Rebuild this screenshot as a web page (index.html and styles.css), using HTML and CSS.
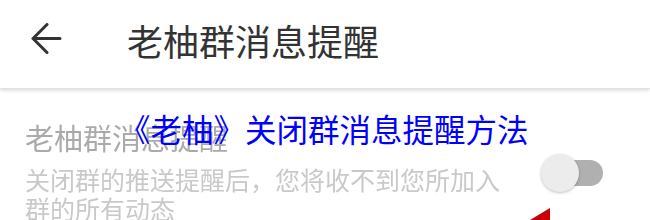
FILE: index.html
```html
<!DOCTYPE html>
<html lang="zh">
<head>
<meta charset="utf-8">
<link rel="stylesheet" href="styles.css">
</head>
<body>
<div class="page">
  <header class="header">
    <span class="back">
      <svg width="32" height="32" viewBox="0 0 32 32"><path d="M30 15.5H3M17 1.5L3 15.5L17 29.5" fill="none" stroke="#333" stroke-width="3" stroke-linecap="round" stroke-linejoin="round"/></svg>
    </span>
    <h1 class="title">老柚群消息提醒</h1>
  </header>
  <main class="content">
    <div class="row">
      <div class="texts">
        <div class="row-title">老柚群消息提醒</div>
        <div class="row-desc">关闭群的推送提醒后，您将收不到您所加入群的所有动态</div>
      </div>
      <div class="switch"><span class="thumb"></span></div>
    </div>
    <div class="caption">《老柚》关闭群消息提醒方法</div>
    <svg class="pointer" width="40" height="20" viewBox="0 0 40 20"><path d="M25 0L0 15L10 20L25 20Z" fill="#c8000a"/></svg>
  </main>
</div>
</body>
</html>
```
FILE: styles.css
```css
html, body {
  margin: 0;
  padding: 0;
  background: #fff;
}
.page {
  width: 650px;
  height: 220px;
  overflow: hidden;
  font-family: "Noto Sans CJK SC", "Noto Sans", sans-serif;
}
.header {
  height: 88px;
  display: flex;
  align-items: center;
  box-shadow: 0 1px 4px rgba(0, 0, 0, 0.18);
  border-bottom: 1px solid #e2e2e2;
  position: relative;
  z-index: 1;
}
.back {
  width: 32px;
  height: 32px;
  margin-left: 30px;
  margin-top: -10px;
  display: flex;
}
.title {
  margin: 0 0 0 65px;
  font-size: 36px;
  font-weight: normal;
  color: #333;
  margin-top: -8px;
}
.content {
  position: relative;
  padding: 28px 0 0 25px;
}
.row {
  display: flex;
  align-items: flex-start;
}
.texts {
  width: 490px;
  filter: blur(0.5px);
}
.row-title {
  font-size: 29px;
  line-height: 40px;
  color: #aaa;
}
.row-desc {
  margin-top: 8px;
  font-size: 25px;
  line-height: 29px;
  color: #c9c9c9;
}
.switch {
  margin: 43px 0 0 38px;
  width: 50px;
  height: 26px;
  border-radius: 13px;
  background: #b0b0b0;
  position: relative;
  filter: blur(0.4px);
}
.thumb {
  position: absolute;
  left: -12px;
  top: -6px;
  width: 38px;
  height: 38px;
  border-radius: 50%;
  background: #ececec;
  box-shadow: 0 1px 3px rgba(0, 0, 0, 0.25);
}
.caption {
  position: absolute;
  left: 119px;
  top: 19px;
  font-size: 31.5px;
  line-height: 40px;
  color: #0000ff;
  white-space: nowrap;
}
.pointer {
  position: absolute;
  left: 525px;
  top: 119px;
}
```
